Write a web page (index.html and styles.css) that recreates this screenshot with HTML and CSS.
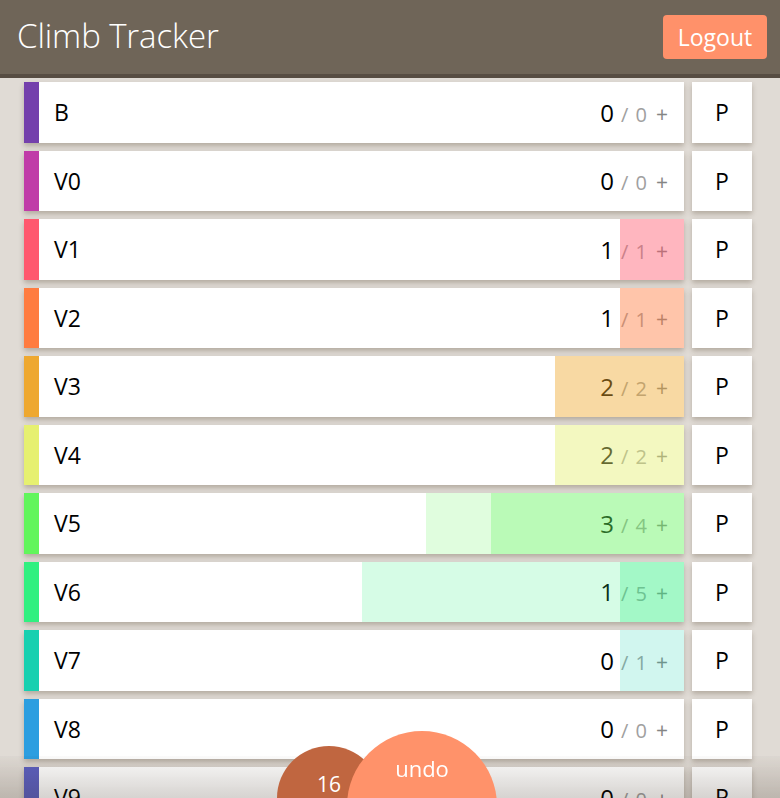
FILE: index.html
```html
<!DOCTYPE html>
<html lang="en">
<head>
<meta charset="utf-8">
<title>Climb Tracker</title>
<link rel="stylesheet" href="styles.css">
</head>
<body>
<header class="topbar">
  <h1 class="title">Climb Tracker</h1>
  <button class="logout">Logout</button>
</header>
<main class="list">
  <div class="row g-b">
    <div class="grade"><span class="strip"></span>
      <div class="body"><span class="label">B</span>
        <span class="count"><span class="sends">0</span><span class="total">/ 0</span><span class="plus">+</span></span>
        <span class="bar bar-total" style="width:0%"></span><span class="bar bar-sends" style="width:0%"></span>
      </div></div>
    <div class="proj">P</div>
  </div>
  <div class="row g-v0">
    <div class="grade"><span class="strip"></span>
      <div class="body"><span class="label">V0</span>
        <span class="count"><span class="sends">0</span><span class="total">/ 0</span><span class="plus">+</span></span>
        <span class="bar bar-total" style="width:0%"></span><span class="bar bar-sends" style="width:0%"></span>
      </div></div>
    <div class="proj">P</div>
  </div>
  <div class="row g-v1">
    <div class="grade"><span class="strip"></span>
      <div class="body"><span class="label">V1</span>
        <span class="count"><span class="sends">1</span><span class="total">/ 1</span><span class="plus">+</span></span>
        <span class="bar bar-total" style="width:10%"></span><span class="bar bar-sends" style="width:10%"></span>
      </div></div>
    <div class="proj">P</div>
  </div>
  <div class="row g-v2">
    <div class="grade"><span class="strip"></span>
      <div class="body"><span class="label">V2</span>
        <span class="count"><span class="sends">1</span><span class="total">/ 1</span><span class="plus">+</span></span>
        <span class="bar bar-total" style="width:10%"></span><span class="bar bar-sends" style="width:10%"></span>
      </div></div>
    <div class="proj">P</div>
  </div>
  <div class="row g-v3">
    <div class="grade"><span class="strip"></span>
      <div class="body"><span class="label">V3</span>
        <span class="count"><span class="sends">2</span><span class="total">/ 2</span><span class="plus">+</span></span>
        <span class="bar bar-total" style="width:20%"></span><span class="bar bar-sends" style="width:20%"></span>
      </div></div>
    <div class="proj">P</div>
  </div>
  <div class="row g-v4">
    <div class="grade"><span class="strip"></span>
      <div class="body"><span class="label">V4</span>
        <span class="count"><span class="sends">2</span><span class="total">/ 2</span><span class="plus">+</span></span>
        <span class="bar bar-total" style="width:20%"></span><span class="bar bar-sends" style="width:20%"></span>
      </div></div>
    <div class="proj">P</div>
  </div>
  <div class="row g-v5">
    <div class="grade"><span class="strip"></span>
      <div class="body"><span class="label">V5</span>
        <span class="count"><span class="sends">3</span><span class="total">/ 4</span><span class="plus">+</span></span>
        <span class="bar bar-total" style="width:40%"></span><span class="bar bar-sends" style="width:30%"></span>
      </div></div>
    <div class="proj">P</div>
  </div>
  <div class="row g-v6">
    <div class="grade"><span class="strip"></span>
      <div class="body"><span class="label">V6</span>
        <span class="count"><span class="sends">1</span><span class="total">/ 5</span><span class="plus">+</span></span>
        <span class="bar bar-total" style="width:50%"></span><span class="bar bar-sends" style="width:10%"></span>
      </div></div>
    <div class="proj">P</div>
  </div>
  <div class="row g-v7">
    <div class="grade"><span class="strip"></span>
      <div class="body"><span class="label">V7</span>
        <span class="count"><span class="sends">0</span><span class="total">/ 1</span><span class="plus">+</span></span>
        <span class="bar bar-total" style="width:10%"></span><span class="bar bar-sends" style="width:0%"></span>
      </div></div>
    <div class="proj">P</div>
  </div>
  <div class="row g-v8">
    <div class="grade"><span class="strip"></span>
      <div class="body"><span class="label">V8</span>
        <span class="count"><span class="sends">0</span><span class="total">/ 0</span><span class="plus">+</span></span>
        <span class="bar bar-total" style="width:0%"></span><span class="bar bar-sends" style="width:0%"></span>
      </div></div>
    <div class="proj">P</div>
  </div>
  <div class="row g-v9">
    <div class="grade"><span class="strip"></span>
      <div class="body"><span class="label">V9</span>
        <span class="count"><span class="sends">0</span><span class="total">/ 0</span><span class="plus">+</span></span>
        <span class="bar bar-total" style="width:0%"></span><span class="bar bar-sends" style="width:0%"></span>
      </div></div>
    <div class="proj">P</div>
  </div>
  <div class="row g-v10">
    <div class="grade"><span class="strip"></span>
      <div class="body"><span class="label">V10</span>
        <span class="count"><span class="sends">0</span><span class="total">/ 0</span><span class="plus">+</span></span>
        <span class="bar bar-total" style="width:0%"></span><span class="bar bar-sends" style="width:0%"></span>
      </div></div>
    <div class="proj">P</div>
  </div>
</main>
<div class="fade"></div>
<button class="badge">16</button>
<button class="undo">undo</button>
</body>
</html>
```
FILE: styles.css
```css
* { box-sizing: border-box; }
html, body { margin: 0; padding: 0; }
body {
  background: #e0dbd5;
  font-family: "Open Sans", "DejaVu Sans", sans-serif;
  color: #000;
}
.topbar {
  height: 78px;
  background: #6f6558;
  border-bottom: 4px solid #574d43;
  display: flex;
  align-items: center;
  justify-content: space-between;
  padding: 0 13px 4px 17px;
}
.title {
  margin: 0;
  font-size: 33px;
  font-weight: 300;
  color: #fff;
  letter-spacing: -0.1px;
}
.logout {
  font-family: inherit;
  width: 104px;
  height: 44px;
  border: none;
  border-radius: 4px;
  background: #ff916a;
  color: #fff;
  font-size: 23px;
  padding: 0;
  margin-top: 4px;
}
.list {
  display: flex;
  flex-direction: column;
  gap: 8px;
  padding: 4px 28px 0 24px;
}
.row {
  display: flex;
  gap: 8px;
  height: 60.5px;
}
.grade {
  flex: 1;
  display: flex;
  box-shadow: 0 3px 5px rgba(70, 50, 30, 0.28);
}
.strip {
  width: 15px;
  background: rgb(var(--c));
}
.body {
  position: relative;
  flex: 1;
  background: #fff;
  display: flex;
  align-items: center;
  justify-content: space-between;
  padding: 0 16px 0 15px;
}
.label { font-size: 23px; }
.count { display: flex; align-items: baseline; }
.sends { font-size: 24px; margin-right: 7px; }
.total { font-size: 20px; color: #a0a0a0; word-spacing: 2px; }
.plus { font-size: 21px; color: #858585; margin-left: 9px; }
.bar {
  position: absolute;
  right: 0;
  top: 0;
  bottom: 0;
}
.bar-total { background: rgba(var(--c), 0.2); }
.bar-sends { background: rgba(var(--c), 0.3); }
.proj {
  width: 60px;
  background: #fff;
  display: flex;
  align-items: center;
  justify-content: center;
  font-size: 23px;
  box-shadow: 0 3px 5px rgba(70, 50, 30, 0.28);
}
.g-b { --c: 116, 64, 172; }
.g-v0 { --c: 192, 60, 168; }
.g-v1 { --c: 255, 88, 110; }
.g-v2 { --c: 255, 124, 64; }
.g-v3 { --c: 238, 168, 48; }
.g-v4 { --c: 230, 240, 112; }
.g-v5 { --c: 98, 245, 92; }
.g-v6 { --c: 48, 240, 128; }
.g-v7 { --c: 24, 208, 176; }
.g-v8 { --c: 44, 158, 224; }
.g-v9 { --c: 92, 96, 192; }
.g-v10 { --c: 140, 70, 190; }
.fade {
  position: fixed;
  left: 0;
  right: 0;
  bottom: 0;
  height: 42px;
  background: linear-gradient(rgba(50, 35, 20, 0.02), rgba(50, 35, 20, 0.2));
  pointer-events: none;
}
.badge, .undo {
  position: fixed;
  border: none;
  border-radius: 50%;
  color: #fff;
  font-family: inherit;
  padding: 0;
  display: flex;
  justify-content: center;
  align-items: flex-start;
}
.badge {
  left: 277px;
  bottom: -52px;
  width: 104px;
  height: 104px;
  background: #c06640;
  font-size: 21px;
  line-height: 24px;
  padding-top: 26px;
}
.undo {
  left: 347px;
  bottom: -83px;
  width: 150px;
  height: 150px;
  background: #ff926a;
  font-size: 22px;
  line-height: 26px;
  padding-top: 24px;
}
```
